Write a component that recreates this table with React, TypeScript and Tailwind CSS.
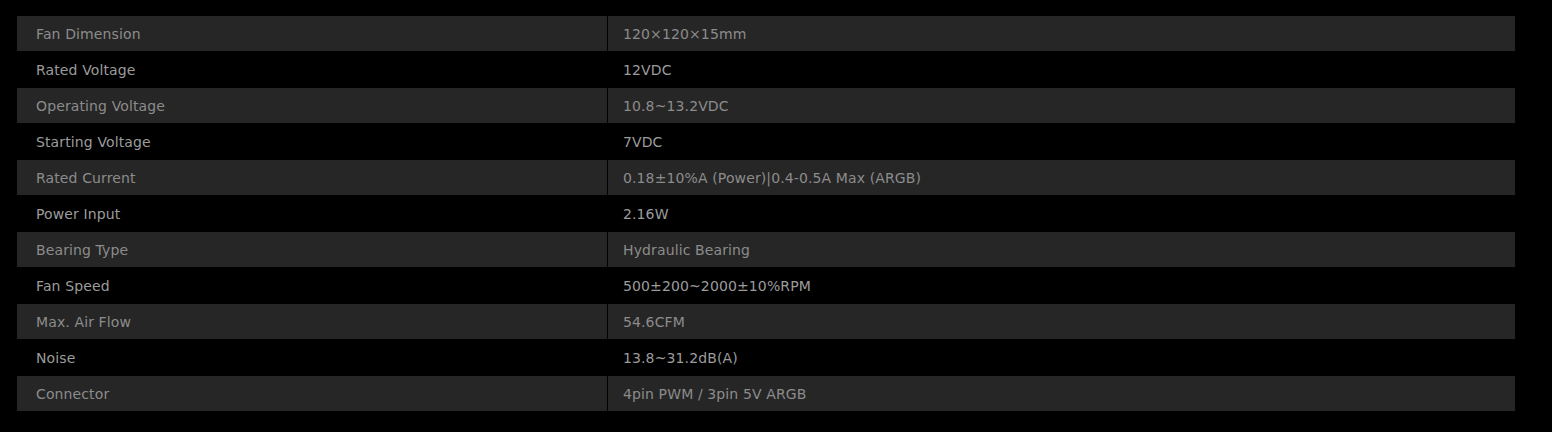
import React from "react";

const rows: [string, string][] = [
  ["Fan Dimension", "120×120×15mm"],
  ["Rated Voltage", "12VDC"],
  ["Operating Voltage", "10.8~13.2VDC"],
  ["Starting Voltage", "7VDC"],
  ["Rated Current", "0.18±10%A (Power)|0.4-0.5A Max (ARGB)"],
  ["Power Input", "2.16W"],
  ["Bearing Type", "Hydraulic Bearing"],
  ["Fan Speed", "500±200~2000±10%RPM"],
  ["Max. Air Flow", "54.6CFM"],
  ["Noise", "13.8~31.2dB(A)"],
  ["Connector", "4pin PWM / 3pin 5V ARGB"],
];

export default function App() {
  return (
    <div
      className="w-[1552px] h-[432px] bg-black pt-[16px] pl-[17px]"
      style={{ fontFamily: '"DejaVu Sans", Verdana, sans-serif' }}
    >
      <div className="w-[1498px] flex flex-col">
        {rows.map(([k, v], i) => {
          const odd = i % 2 === 0;
          return (
            <div
              key={k}
              className={`flex h-[36px] border-b border-black text-[14px] leading-[37px] tracking-[0.12px] ${
                odd ? "bg-[#262626] text-[#8c8c8c]" : "bg-black text-[#9c9c9c]"
              }`}
            >
              <div className="w-[591px] shrink-0 pl-[19px] border-r border-black">{k}</div>
              <div className="flex-1 pl-[15px]">{v}</div>
            </div>
          );
        })}
      </div>
    </div>
  );
}
